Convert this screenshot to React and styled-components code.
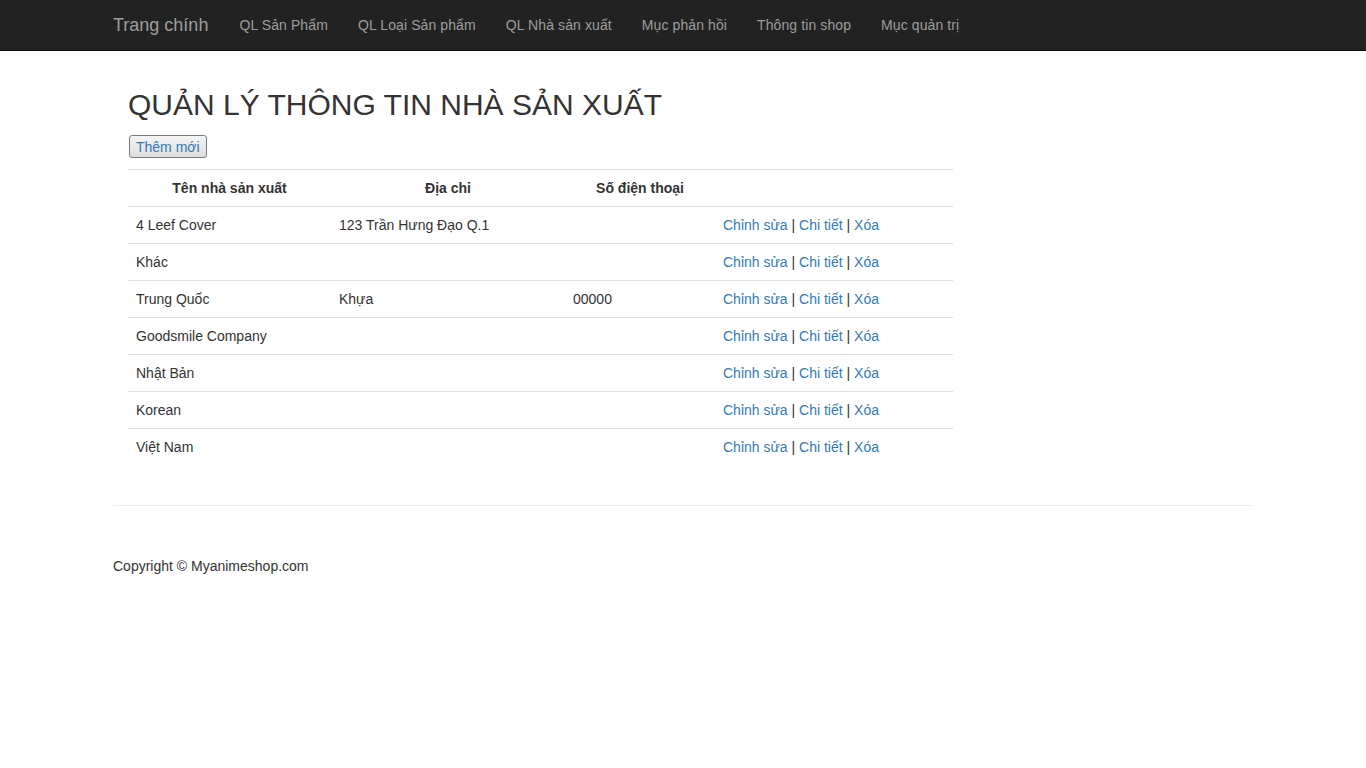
import React from 'react'
import styled, { createGlobalStyle } from 'styled-components'

const GlobalStyle = createGlobalStyle`
  html, body {
    margin: 0;
    padding: 0;
    background: #fff;
  }
  body {
    font-family: "Liberation Sans", Arial, sans-serif;
    font-size: 14px;
    line-height: 1.42857;
    color: #333;
  }
  * { box-sizing: border-box; }
`

const Navbar = styled.nav`
  background: #222;
  border-bottom: 1px solid #080808;
  height: 51px;
`

const NavContainer = styled.div`
  width: 1170px;
  margin: 0 auto;
  padding: 0 15px;
  display: flex;
  align-items: flex-start;
`

const Brand = styled.a`
  display: block;
  height: 50px;
  padding: 15px 16px 15px 15px;
  margin-left: -15px;
  font-size: 18px;
  line-height: 20px;
  color: #9d9d9d;
  text-decoration: none;
`

const NavList = styled.ul`
  display: flex;
  list-style: none;
  margin: 0;
  padding: 0;
`

const NavLink = styled.a`
  display: block;
  padding: 15px;
  line-height: 20px;
  letter-spacing: 0.1px;
  color: #9d9d9d;
  text-decoration: none;
`

const Container = styled.div`
  width: 1170px;
  margin: 0 auto;
  padding: 0 15px;
`

const Body = styled.div`
  padding: 0 15px;
`

const Title = styled.h2`
  margin: 37px 0 10px;
  font-size: 30px;
  font-weight: 500;
  line-height: 1.1;
  color: #333;
`

const Actions = styled.div`
  display: flex;
  padding-top: 4px;
  margin: 0 0 11px 1px;
`

const Button = styled.button`
  height: 23px;
  padding: 0 6px;
  border: 1px solid #7a7a7a;
  border-radius: 3px;
  background: linear-gradient(#f4f4f4, #dedede);
  font-family: inherit;
  font-size: 14px;
  line-height: 20px;
  color: #337ab7;
`

const Table = styled.table`
  width: 825px;
  border-collapse: collapse;
  border-spacing: 0;
  margin-bottom: 40px;
`

const Th = styled.th`
  padding: 8px;
  line-height: 20px;
  border-top: 1px solid #ddd;
  text-align: center;
  font-weight: bold;
`

const Td = styled.td`
  padding: 8px;
  line-height: 20px;
  border-top: 1px solid #ddd;
  vertical-align: top;
`

const Link = styled.a`
  color: #337ab7;
  text-decoration: none;
`

const Rule = styled.hr`
  margin: 20px 0;
  border: 0;
  border-top: 1px solid #eee;
`

const Footer = styled.footer`
  padding-top: 30px;
  line-height: 20px;
`

const navItems = ['QL Sản Phẩm', 'QL Loại Sản phẩm', 'QL Nhà sản xuất', 'Mục phản hồi', 'Thông tin shop', 'Mục quản trị']

const makers = [
  { name: '4 Leef Cover', address: '123 Trần Hưng Đạo Q.1', phone: '' },
  { name: 'Khác', address: '', phone: '' },
  { name: 'Trung Quốc', address: 'Khựa', phone: '00000' },
  { name: 'Goodsmile Company', address: '', phone: '' },
  { name: 'Nhật Bản', address: '', phone: '' },
  { name: 'Korean', address: '', phone: '' },
  { name: 'Việt Nam', address: '', phone: '' },
]

const App = () => (
  <>
    <GlobalStyle />
    <Navbar>
      <NavContainer>
        <Brand href="#">Trang chính</Brand>
        <NavList>
          {navItems.map(item => (
            <li key={item}><NavLink href="#">{item}</NavLink></li>
          ))}
        </NavList>
      </NavContainer>
    </Navbar>
    <Container>
      <Body>
        <Title>QUẢN LÝ THÔNG TIN NHÀ SẢN XUẤT</Title>
        <Actions>
          <Button>Thêm mới</Button>
        </Actions>
        <Table>
          <colgroup>
            <col style={{ width: 203 }} />
            <col style={{ width: 234 }} />
            <col style={{ width: 150 }} />
            <col style={{ width: 238 }} />
          </colgroup>
          <tbody>
            <tr>
              <Th>Tên nhà sản xuất</Th>
              <Th>Địa chỉ</Th>
              <Th>Số điện thoại</Th>
              <Th></Th>
            </tr>
            {makers.map(m => (
              <tr key={m.name}>
                <Td>{m.name}</Td>
                <Td>{m.address}</Td>
                <Td>{m.phone}</Td>
                <Td>
                  <Link href="#">Chỉnh sửa</Link> | <Link href="#">Chi tiết</Link> | <Link href="#">Xóa</Link>
                </Td>
              </tr>
            ))}
          </tbody>
        </Table>
      </Body>
      <Rule />
      <Footer>Copyright © Myanimeshop.com</Footer>
    </Container>
  </>
)

export default App
